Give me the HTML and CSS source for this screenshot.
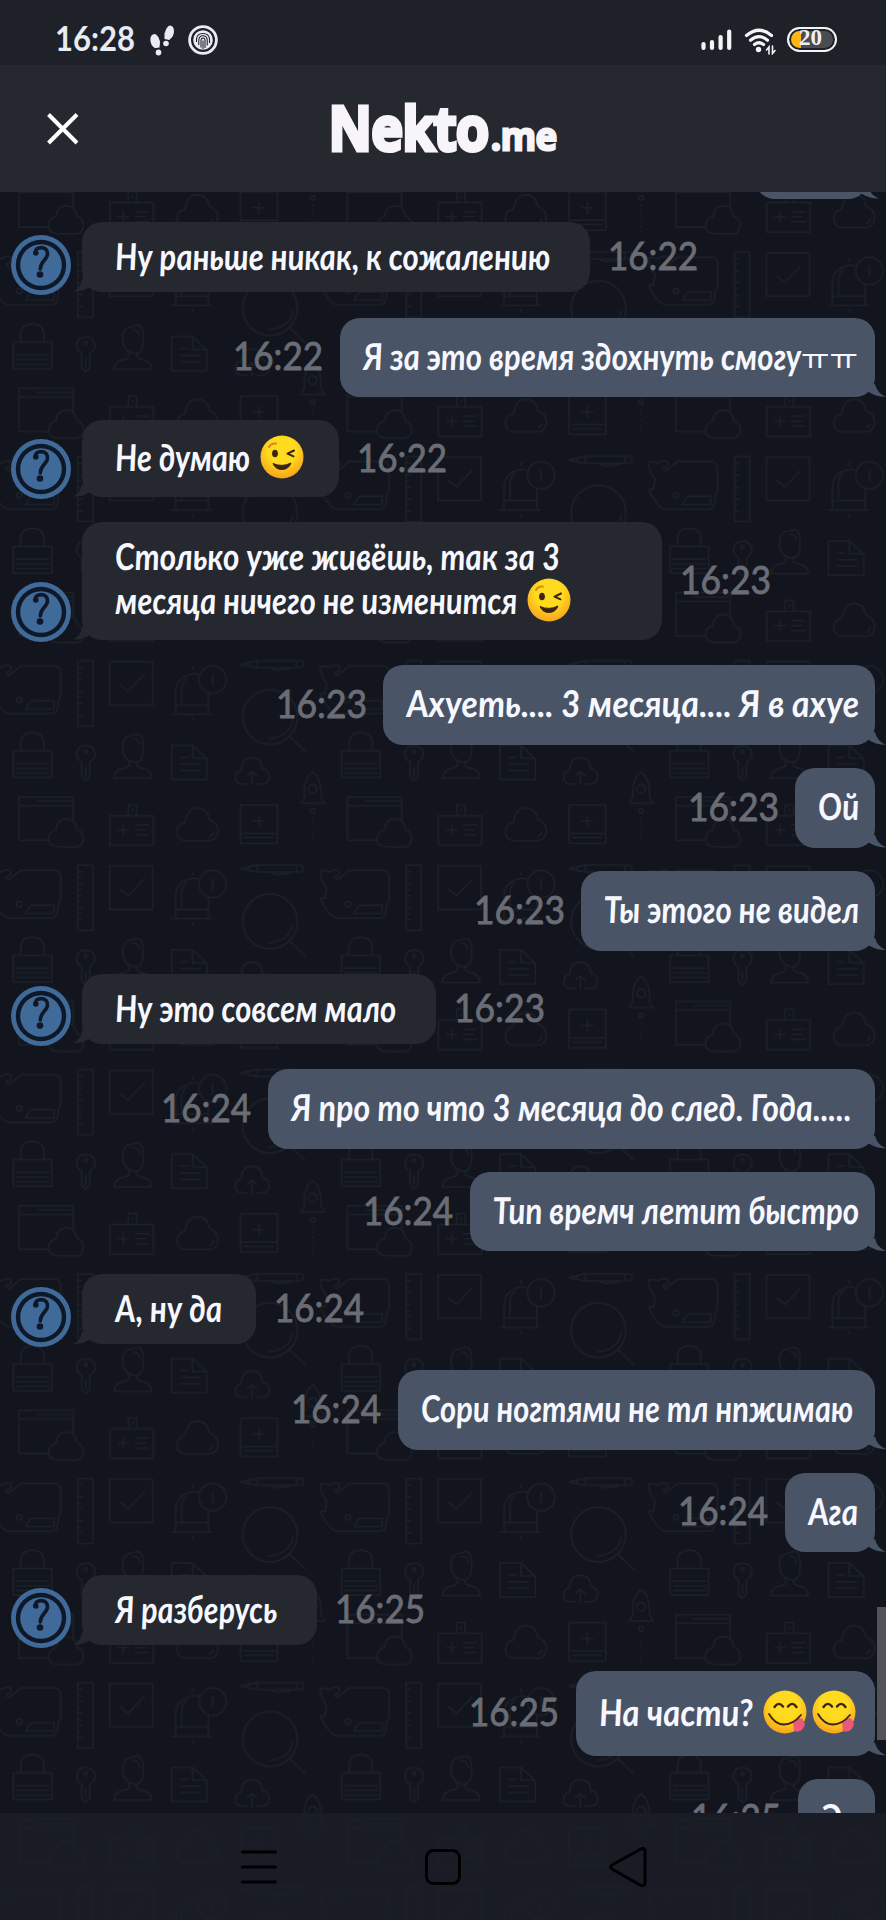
FILE: index.html
```html
<!DOCTYPE html>
<html lang="ru">
<head>
<meta charset="utf-8">
<title>Nekto.me</title>
<link rel="stylesheet" href="styles.css">
</head>
<body>
<svg class="defs" width="0" height="0" aria-hidden="true">
  <defs>
    <symbol id="avatar" viewBox="0 0 60 60">
      <circle cx="30" cy="30" r="30" fill="#406a9a"/>
      <circle cx="30" cy="30" r="25.2" fill="#0f1827"/>
      <circle cx="30" cy="30" r="20.8" fill="#406a9a"/>
      <path d="M24.5 18C24 14 27 12.6 30.5 12.6C35 12.6 36.500 16 36.500 19C36.500 25 29.300 26 29.300 34" fill="none" stroke="#0f1827" stroke-width="3.600" stroke-linecap="round"/>
      <circle cx="24.800" cy="18" r="2.800" fill="#0f1827"/>
      <circle cx="29" cy="39.500" r="3.300" fill="#0f1827"/>
    </symbol>
    <radialGradient id="face" cx=".5" cy=".35" r=".7"><stop offset=".45" stop-color="#ffdb1f"/><stop offset="1" stop-color="#f79a1c"/></radialGradient>
    <symbol id="wink" viewBox="0 0 44 44">
      <circle cx="22" cy="22" r="21.500" fill="url(#face)"/>
      <ellipse cx="15" cy="18.500" rx="2.900" ry="3.800" fill="#3c2412"/>
      <path d="M9 12q2-4 7-3.500" fill="none" stroke="#d78a12" stroke-width="2" stroke-linecap="round"/>
      <path d="M34 15.500l-6.500 3.200 6 2.600" fill="none" stroke="#3c2412" stroke-width="2" stroke-linecap="round" stroke-linejoin="round"/>
      <path d="M13 28.500q9 4 18-.5q-2.500 6.500-9 6.500t-9-6z" fill="#3c2412" stroke="#3c2412" stroke-linejoin="round"/>
    </symbol>
    <symbol id="yum" viewBox="0 0 44 44">
      <circle cx="22" cy="22" r="21.500" fill="url(#face)"/>
      <path d="M11.500 17q4-6 8.500-.5M25 16.500q4.500-5.500 8.500.5" fill="none" stroke="#3c2412" stroke-width="2.400" stroke-linecap="round"/>
      <path d="M30 32q4-5 9-3.500q5 5 1 10q-4 5-9 2.500z" fill="#ea5a78"/>
      <path d="M6 24q6 10.500 15 10.500t17-9.500" fill="none" stroke="#3c2412" stroke-width="1.800" stroke-linecap="round"/>
    </symbol>
    <g id="whale">
      <path d="M-24 30Q-10 25 2 33Q18 22 34 29Q34 46 20 46Q18 53 28 56Q42 44 62 28H165Q182 30 182 48V118Q175 124 175 134L172 155Q170 171 152 171H30Q5 171-22 118V110L-10 112L-5 80Q-24 60-24 30Z"/>
      <circle cx="58" cy="129" r="8"/><path d="M77 157L88 138Q92 132 102 132H162V157Z"/>
    </g>
    <pattern id="doodles" width="985.200" height="613.200" patternUnits="userSpaceOnUse" patternTransform="translate(0 43.500) scale(.33333)">
      <g fill="none" stroke="#1c2028" stroke-width="4.500" stroke-linejoin="round">
        <use href="#whale"/><use href="#whale" x="985.200"/>
        <path d="M233 13H279V208H233ZM233 32h14m-14 18h9m-9 18h14m-14 18h9m-9 18h14m-14 18h9m-9 18h14m-14 18h9m-9 18h14"/>
        <path d="M329 15H458V145H329ZM360 84L384 104L432 54"/>
        <path d="M598 55Q577 48 560 57Q527 70 527 105V173M625 110V173M545 145V95Q545 75 560 65M527 145H625M514 173H636M578 184V194M578 30v12"/><circle cx="638" cy="69" r="41"/><path d="M638 52v34"/>
        <path d="M722 23L768 12H898Q911 12 911 22T898 33H768ZM768 12q8 10 0 21M890 12v21M810 33l20 8 40-4M745 18v10"/>
        <circle cx="810" cy="181" r="82"/><path d="M868 239L916 285M879 187Q872 238 806 246"/>
        <path d="M40 283H155V363H40ZM62 283V262Q62 228 97 228T132 262V283M48 321H148M48 335H148M48 349H148"/>
        <path d="M245 316V360L257 371L269 360V316Q285 308 285 293Q283 267 257 267T230 293Q230 308 245 316ZM257 330v30"/><circle cx="257" cy="285" r="5"/>
        <path d="M387 315V325Q387 332 370 335Q344 340 342 364H455Q453 340 428 335Q411 332 411 325V315M399 236Q368 236 368 272T399 316T430 272T399 236M397 246q20-2 22 20"/>
        <path d="M515 266H578L621 307V369H515ZM578 266V305H621M540 302h25m-25 20h62m-62 20h62"/>
        <path d="M742 382H728Q706 382 706 362Q706 344 724 340Q726 303 756 303T787 337Q808 338 808 362Q806 382 786 382H770M756 386V345M741 358L756 344L771 358"/>
        <path d="M903 440H975L963 422Q966 365 938 346Q910 365 913 422Z"/><circle cx="938" cy="397" r="13"/><circle cx="938" cy="463" r="7"/><path d="M938 482V575" stroke-dasharray="4 12"/>
        <path d="M145 551H57V421H220V492M57 447H220M110 434H215"/>
        <path d="M168 570Q145 567 146 546Q147 525 168 520Q172 487 199 487T231 518Q252 526 250 550Q246 571 226 571Z"/>
        <path d="M330 477H460V566H330ZM385 475V444H410V475M398 455v10M370 502v36M353 520h34M405 505h42m-42 15h32m-32 15h42"/>
        <path d="M555 552Q530 550 531 523Q532 502 555 497Q562 454 592 454T628 489Q655 498 654 525Q650 553 626 552ZM640 525q-2 12-12 15"/>
        <path d="M722 445H832V560H722ZM722 530H832M732 543H820M777 475v36M759 493h36"/>
      </g>
    </pattern>
  </defs>
</svg>
<div class="screen">
  <svg class="wallpaper" width="886" height="1920" aria-hidden="true"><rect width="886" height="1920" fill="url(#doodles)"/></svg>

  <div class="status">
    <span class="clock"><span data-fit="80">16:28</span></span>
    <svg class="steps" width="24" height="32" viewBox="0 0 24 32" fill="#e9ebf2"><ellipse cx="5" cy="16" rx="4.500" ry="7" transform="rotate(-12 5 16)"/><path d="M2.500 17L10 15.500L9.500 22.500L4.500 23Z"/><ellipse cx="8.500" cy="27.500" rx="2.800" ry="3"/><ellipse cx="19.500" cy="7.500" rx="4.300" ry="7" transform="rotate(12 19.500 7.500)"/><path d="M14.500 7.500L22 9L19.500 15L14.500 14Z"/><ellipse cx="16" cy="18.500" rx="2.800" ry="2.800"/></svg>
    <svg class="finger" width="30" height="30" viewBox="0 0 30 30" fill="none" stroke="#e9ebf2"><circle cx="15" cy="15" r="13.400" stroke-width="2.800"/><circle cx="15" cy="15" r="9.800" fill="#e9ebf2" stroke="none"/><g stroke="#1e2128" stroke-width="1.100"><path d="M8.500 17V14Q9 8.500 15 8.500T21.500 14V18M10.800 20V14.500Q11.500 10.800 15 10.800T19.200 14.500V20.500M13 22.500V15Q13.200 13 15 13T17 15V23M15 15.500V24"/></g></svg>
    <svg class="signal" width="31" height="22" viewBox="0 0 31 22" stroke="#f4f5f8" stroke-width="4.200" stroke-linecap="round"><path d="M2.500 15V19M11 13V19M19.600 8V19M28.200 2.500V19"/></svg>
    <svg class="wifi" width="32" height="27" viewBox="0 0 32 27" fill="none" stroke="#f4f5f8" stroke-width="3.200" stroke-linecap="round"><path d="M2.500 7.500Q15 -3 27.500 7.500M6.500 12.300Q15 5 23.500 12.300M10.500 16.500Q15 13 19.500 16.500"/><circle cx="14.500" cy="21.500" r="2.700" fill="#f4f5f8" stroke="none"/><path d="M25 26V19l-2.500 3M28.500 18V25.500l2.500-3" stroke-width="1.600"/></svg>
    <span class="battery"><span>20</span></span>
  </div>

  <header class="header">
    <svg class="close" width="32" height="32" viewBox="0 0 32 32" stroke="#fff" stroke-width="4"><path d="M1.500 1.500L30 30M30 1.500L1.500 30"/></svg>
    <div class="logo"><span class="logo-main" data-fit="160">Nekto</span><span class="logo-sub" data-fit="66">.me</span></div>
  </header>

  <main class="chat">
    <div class="row out cut"><div class="bubble" style="width:113px"></div></div>
    <div class="row in"><svg class="avatar"><use href="#avatar"/></svg><div class="bubble" style="width:508px"><p><span data-fit="435">Ну раньше никак, к сожалению</span></p></div><time><span data-fit="90">16:22</span></time></div>
    <div class="row out"><time><span data-fit="90">16:22</span></time><div class="bubble" style="width:535px"><p><span data-fit="438">Я за это время здохнуть смогу</span><span class="jamo" data-fit="57">ㅠㅠ</span></p></div></div>
    <div class="row in smile"><svg class="avatar"><use href="#avatar"/></svg><div class="bubble" style="width:257px"><p><span data-fit="135">Не думаю</span><svg class="emoji" role="img" aria-label="😉"><use href="#wink"/></svg></p></div><time><span data-fit="90">16:22</span></time></div>
    <div class="row in"><svg class="avatar"><use href="#avatar"/></svg><div class="bubble two" style="width:580px"><p><span data-fit="445">Столько уже живёшь, так за 3</span></p><p><span data-fit="402">месяца ничего не изменится</span><svg class="emoji" role="img" aria-label="😉"><use href="#wink"/></svg></p></div><time><span data-fit="91">16:23</span></time></div>
    <div class="row out"><time><span data-fit="91">16:23</span></time><div class="bubble" style="width:492px"><p><span data-fit="453">Ахуеть.... 3 месяца.... Я в ахуе</span></p></div></div>
    <div class="row out"><time><span data-fit="91">16:23</span></time><div class="bubble" style="width:80px"><p><span data-fit="41">Ой</span></p></div></div>
    <div class="row out"><time><span data-fit="91">16:23</span></time><div class="bubble" style="width:294px"><p><span data-fit="255">Ты этого не видел</span></p></div></div>
    <div class="row in"><svg class="avatar"><use href="#avatar"/></svg><div class="bubble" style="width:354px"><p><span data-fit="281">Ну это совсем мало</span></p></div><time><span data-fit="91">16:23</span></time></div>
    <div class="row out"><time><span data-fit="90">16:24</span></time><div class="bubble" style="width:607px"><p><span data-fit="560">Я про то что 3 месяца до след. Года.....</span></p></div></div>
    <div class="row out"><time><span data-fit="90">16:24</span></time><div class="bubble" style="width:405px"><p><span data-fit="366">Тип времч летит быстро</span></p></div></div>
    <div class="row in"><svg class="avatar"><use href="#avatar"/></svg><div class="bubble" style="width:174px"><p><span data-fit="107">А, ну да</span></p></div><time><span data-fit="90">16:24</span></time></div>
    <div class="row out"><time><span data-fit="90">16:24</span></time><div class="bubble" style="width:477px"><p><span data-fit="432">Сори ногтями не тл нпжимаю</span></p></div></div>
    <div class="row out"><time><span data-fit="90">16:24</span></time><div class="bubble" style="width:90px"><p><span data-fit="50">Ага</span></p></div></div>
    <div class="row in"><svg class="avatar"><use href="#avatar"/></svg><div class="bubble" style="width:235px"><p><span data-fit="162">Я разберусь</span></p></div><time><span data-fit="90">16:25</span></time></div>
    <div class="row out smile"><time><span data-fit="90">16:25</span></time><div class="bubble" style="width:299px"><p><span data-fit="154">На части?</span><svg class="emoji" role="img" aria-label="😋"><use href="#yum"/></svg><svg class="emoji next" role="img" aria-label="😋"><use href="#yum"/></svg></p></div></div>
    <div class="row out"><time><span data-fit="90">16:25</span></time><div class="bubble" style="width:77px"><p><span data-fit="21">Э</span></p></div></div>
    <div class="scrollbar"></div>
  </main>

  <nav class="nav">
    <svg width="36" height="36" viewBox="0 0 36 36" fill="none" stroke="#000" stroke-width="3" stroke-linecap="round"><path d="M1.500 3H34.500M1.500 18H34.500M1.500 33H34.500"/></svg>
    <svg width="36" height="36" viewBox="0 0 36 36" fill="none" stroke="#000" stroke-width="3"><rect x="1.500" y="1.500" width="33" height="33" rx="7"/></svg>
    <svg width="38" height="40" viewBox="0 0 38 40" fill="none" stroke="#000" stroke-width="3" stroke-linejoin="round"><path d="M3 18L31 2.500Q36 0 36 4V36Q36 40 31 38L3 22Q0 20 3 18Z"/></svg>
  </nav>
</div>
<script src="fit.js"></script>
</body>
</html>
```
FILE: styles.css
```css
* { box-sizing: border-box; }
body { margin: 0; background: #12151d; font-family: Lato, "Noto Sans", sans-serif; }
.defs { position: absolute; }
.screen { position: relative; width: 886px; height: 1920px; overflow: hidden; display: flex; flex-direction: column; background: #12151d; }
.wallpaper { position: absolute; left: 0; top: 0; }

[data-fit] { display: inline-block; white-space: pre; transform-origin: 0 50%; }

.status { position: relative; height: 65px; flex: none; background: #1e2128; display: flex; align-items: flex-start; padding-left: 55px; color: #e9ebf2; }
.clock { font-size: 35px; line-height: 42px; font-weight: 700; margin-top: 16px; width: 80px; }
.steps { margin: 25px 0 0 15px; }
.finger { margin: 25px 0 0 14px; }
.signal { margin: 29px 0 0 483px; }
.wifi { margin: 28px 0 0 12px; }
.battery { margin: 27px 0 0 11px; width: 50px; height: 25px; border: 2px solid #f4f5f8; border-radius: 13px; box-shadow: inset 0 0 0 2px #1e2128; display: flex; justify-content: center; background: linear-gradient(90deg, #fdb515 12px, #4b4c52 12px); }
.battery span { font: 700 23px/18px "Liberation Serif", serif; color: #eef0f5; margin-left: -3px; }

.header { position: relative; height: 127px; flex: none; background: #25282f; display: flex; align-items: flex-start; padding-left: 47px; }
.close { margin-top: 48px; }
.logo { margin: 22px 0 0 250px; display: flex; align-items: baseline; gap: 2px; color: #f8f5fa; font-family: "Noto Sans", sans-serif; line-height: 80px; stroke-linejoin: round; }
.logo-main { font-size: 60px; font-weight: 600; -webkit-text-stroke: 5px #f8f5fa; }
.logo-sub { font-size: 37px; font-weight: 600; -webkit-text-stroke: 3px #f8f5fa; }

.chat { position: relative; height: 1621px; flex: none; overflow: hidden; }
.row { position: relative; display: flex; align-items: center; width: 886px; }
.row.in { padding-left: 82px; margin-bottom: 25.500px; }
.row.out { padding-right: 11px; justify-content: flex-end; margin-bottom: 23px; }
.bubble { position: relative; flex: none; height: 70px; border-radius: 20px; background: #25282f; color: #f7f8ff; padding: 12px 0 0 33px; }
.out .bubble { height: 79.700px; background: #495466; padding: 16px 0 0 23px; }
.in.smile .bubble { height: 76.800px; padding-top: 15px; }
.out.smile .bubble { height: 85px; padding-top: 19px; }
.in .bubble.two { height: 117.500px; }
.row.cut .bubble { height: 80px; margin-top: -73px; margin-right: 7px; }
.cut .bubble::after { right: -18px; }
.bubble::after { content: ""; position: absolute; bottom: 0; width: 17px; height: 13px; }
.in .bubble::after { left: -9px; background: #25282f; clip-path: path("M9 0Q8 9 0 12.500Q9 13 17 8V0Z"); }
.out .bubble::after { right: -11px; background: #495466; clip-path: path("M6 0Q8 9 17 12.500Q9 13 0 8V0Z"); }
.bubble p { margin: 0; height: 44px; display: flex; align-items: center; font-weight: 700; font-style: italic; font-size: 37px; line-height: 44px; }
.bubble p [data-fit] { --lean: 4deg; }
.bubble p .jamo { --lean: 0deg; font-family: "Noto Sans CJK KR", sans-serif; font-style: normal; font-weight: 400; font-size: 30px; }
.emoji { width: 44px; height: 44px; margin-left: 10px; flex: none; }
.emoji.next { margin-left: 5px; }
.avatar { position: absolute; left: 11px; bottom: -2.500px; width: 60px; height: 60px; }
time { color: #6a6d75; font-size: 39px; line-height: 46px; font-weight: 400; width: 90px; flex: none; margin-top: -4px; -webkit-text-stroke: .9px #6a6d75; }
.in time { margin-left: 18px; }
.out time { margin-right: 17px; }
.scrollbar { position: absolute; right: 0; top: 1415px; width: 9px; height: 133px; background: #525357; }

.nav { position: relative; height: 107px; flex: none; background: rgba(27, 30, 38, .82); display: flex; align-items: center; padding-left: 241px; gap: 148px; }
```
FILE: fit.js
```js
// Sets each label to its designed width.
document.querySelectorAll("[data-fit]").forEach(function (el) {
  var target = Number(el.dataset.fit);
  var natural = el.getBoundingClientRect().width;
  el.style.transform = "scaleX(" + target / natural + ") skewX(var(--lean, 0deg))";
  el.style.marginRight = target - natural + "px";
});
```
